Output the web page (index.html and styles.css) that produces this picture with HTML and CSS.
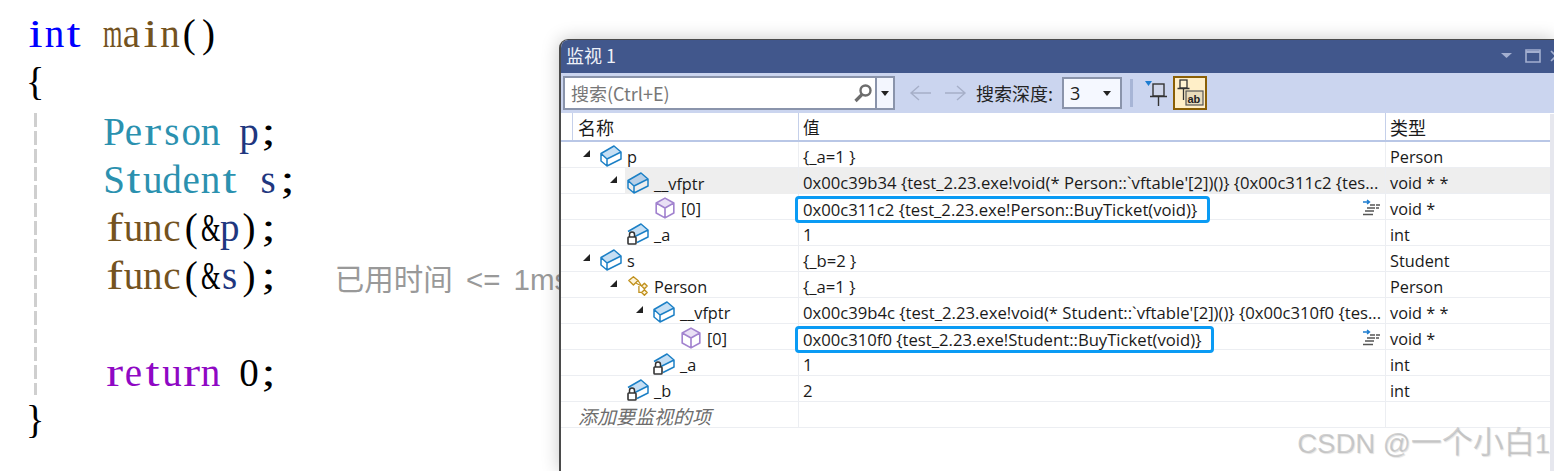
FILE: index.html
```html
<!DOCTYPE html>
<html lang="zh">
<head>
<meta charset="utf-8">
<title>监视 1</title>
<link rel="stylesheet" href="styles.css">
</head>
<body>
<svg class="defs" width="0" height="0" aria-hidden="true">
  <symbol id="box" viewBox="0 0 22 22">
    <path d="M1 8.500 14 1l7 6-14 7z" fill="#c6dff4"/>
    <path d="M1 8.500 7 14v7l-6-5zM7 14l14-7v7L7 21z" fill="#fff"/>
    <path d="M1 8.500 14 1l7 6v7L7 21l-6-5zM1 8.500 7 14l14-7M7 14v7" fill="none" stroke="#1c80c6" stroke-width="1.500" stroke-linejoin="round"/>
  </symbol>
  <symbol id="boxhl" viewBox="0 0 22 22">
    <path d="M1 8.500 14 1l7 6-14 7z" fill="#b8d0e8"/>
    <path d="M1 8.500 14 1l7 6v7L7 21l-6-5zM1 8.500 7 14l14-7M7 14v7" fill="none" stroke="#1c80c6" stroke-width="1.500" stroke-linejoin="round"/>
  </symbol>
  <symbol id="cube" viewBox="0 0 20 20">
    <path d="M10 1l8 4.500-8 4.500-8-4.500z" fill="#e9e0f5"/>
    <path d="M10 1l8 4.500v9L10 19l-8-4.500v-9zM2 5.500l8 4.500 8-4.500M10 10v9" fill="none" stroke="#a283cf" stroke-width="1.500" stroke-linejoin="round"/>
  </symbol>
  <symbol id="lockbox" viewBox="0 0 22 22">
    <path d="M1 8.500 14 1l7 6-14 7z" fill="#c6dff4"/>
    <path d="M1 8.500 14 1l7 6v7L10 19.500M7 14l14-7" fill="none" stroke="#1c80c6" stroke-width="1.500" stroke-linejoin="round"/>
    <path d="M2.500 14v-2.500a2.500 2.500 0 0 1 5 0V14" fill="#fff" stroke="#333" stroke-width="1.500"/>
    <rect x="1" y="14" width="8" height="7" rx=".8" fill="#fff" stroke="#333" stroke-width="1.600"/>
  </symbol>
  <symbol id="base" viewBox="0 0 24 22">
    <path d="M7 1l5 4-5 5-5-5zM19 8l3 3-3 3-3-3zM19 15l3 3-3 3-3-3z" fill="#fdf3d8" stroke="#c0901c" stroke-width="1.500" stroke-linejoin="round"/>
    <path d="M10 8l6 3M12 5l4 6M13 11v7h3" fill="none" stroke="#c0901c" stroke-width="1.400"/>
  </symbol>
  <symbol id="tri" viewBox="0 0 9 9">
    <path d="M8 1v7H1z" fill="#222"/>
  </symbol>
  <symbol id="viz" viewBox="0 0 18 18">
    <path d="M1 3h6M5 1l2.500 2L5 5" fill="none" stroke="#1c7cd0" stroke-width="1.400"/>
    <path d="M8 6h5M14 6h4M5 9h8M14 9h3M3 12h9M1 15.500h10" fill="none" stroke="#555" stroke-width="1.300"/>
  </symbol>
</svg>

<main class="code">
  <div class="line"><span class="kw"><i class="n">i</i><i>n</i><i class="n">t</i></span><i>&nbsp;</i><span class="fn"><i class="w">m</i><i>a</i><i class="n">i</i><i>n</i></span><span class="pn"><i>(</i><i>)</i></span></div>
  <div class="line"><span class="pn"><i>{</i></span></div>
  <div class="block">
    <div class="line"><span class="ty"><i>P</i><i>e</i><i class="n">r</i><i>s</i><i>o</i><i>n</i></span><i>&nbsp;</i><span class="var"><i>p</i></span><span class="pn"><i class="n">;</i></span></div>
    <div class="line"><span class="ty"><i>S</i><i class="n">t</i><i>u</i><i>d</i><i>e</i><i>n</i><i class="n">t</i></span><i>&nbsp;</i><span class="var"><i>s</i></span><span class="pn"><i class="n">;</i></span></div>
    <div class="line"><span class="fn"><i class="n">f</i><i>u</i><i>n</i><i>c</i></span><span class="pn"><i>(</i><i class="w">&amp;</i></span><span class="var"><i>p</i></span><span class="pn"><i>)</i><i class="n">;</i></span></div>
    <div class="line"><span class="fn"><i class="n">f</i><i>u</i><i>n</i><i>c</i></span><span class="pn"><i>(</i><i class="w">&amp;</i></span><span class="var"><i>s</i></span><span class="pn"><i>)</i><i class="n">;</i></span><span class="hint">已用时间 &lt;= 1ms</span></div>
    <div class="line"></div>
    <div class="line"><span class="rt"><i class="n">r</i><i>e</i><i class="n">t</i><i>u</i><i class="n">r</i><i>n</i></span><i>&nbsp;</i><span class="pn"><i>0</i><i class="n">;</i></span></div>
  </div>
  <div class="line"><span class="pn"><i>}</i></span></div>
</main>

<section class="watch">
  <header class="titlebar">
    <span class="title">监视 1</span>
    <svg class="winbtns" width="60" height="16" viewBox="0 0 60 16">
      <path d="M0 5h11l-5.500 5z" fill="#a3afd0"/>
      <path d="M25 2h14v12H25z" fill="none" stroke="#a3afd0" stroke-width="1.600"/>
      <path d="M25 3h14v2H25z" fill="#a3afd0"/>
      <path d="M50 3l10 10M60 3 50 13" stroke="#a3afd0" stroke-width="1.600"/>
    </svg>
  </header>
  <div class="toolbar">
    <div class="search">
      <span class="search-text">搜索(Ctrl+E)</span>
      <svg class="mag" width="20" height="20" viewBox="0 0 20 20">
        <circle cx="12.500" cy="7.500" r="5" fill="none" stroke="#6d6d6d" stroke-width="2.400"/>
        <path d="M9 11.500 2.500 18" stroke="#6d6d6d" stroke-width="3.200"/>
      </svg>
      <span class="drop"><span class="caret"></span></span>
    </div>
    <svg class="nav" width="58" height="18" viewBox="0 0 58 18">
      <path d="M22 9H2M10 2 2 9l8 7M36 9h20M48 2l8 7-8 7" fill="none" stroke="#a6afc8" stroke-width="1.400"/>
    </svg>
    <span class="depth-label">搜索深度:</span>
    <div class="combo"><span class="combo-val">3</span><span class="caret"></span></div>
    <span class="sep"></span>
    <svg class="pin" width="22" height="26" viewBox="0 0 22 26">
      <path d="M0 1h7L3.500 6z" fill="#1c7cd0"/>
      <rect x="8" y="4" width="11" height="12" fill="#cfd6ea" stroke="#333" stroke-width="1.400"/>
      <path d="M5 16.500h17M13.500 17v9" stroke="#333" stroke-width="1.400"/>
    </svg>
    <button class="toggle" type="button">
      <svg width="28" height="28" viewBox="0 0 28 28">
        <rect x="4" y="1" width="7" height="8" fill="#fff3d2" stroke="#333" stroke-width="1.300"/>
        <path d="M1.500 9.500h12M7.500 10v11" stroke="#333" stroke-width="1.300"/>
        <rect x="10" y="12" width="17" height="14" fill="#e9dcbc" stroke="#555" stroke-width="1.200"/>
        <text x="11.500" y="24" class="ab">ab</text>
      </svg>
    </button>
  </div>
  <div class="grid">
    <div class="row head"><div class="cell"></div><div class="cell name">名称</div><div class="cell val">值</div><div class="cell typ">类型</div></div>

    <div class="row"><div class="cell"></div><div class="cell name l0"><svg class="tri"><use href="#tri"/></svg><svg class="ico"><use href="#box"/></svg><span class="txt">p</span></div><div class="cell val">{_a=1 }</div><div class="cell typ">Person</div></div>

    <div class="row sel"><div class="cell"></div><div class="cell name l1"><svg class="tri"><use href="#tri"/></svg><span class="selname"><svg class="ico"><use href="#boxhl"/></svg><span class="txt">__vfptr</span></span></div><div class="cell val">0x00c39b34 {test_2.23.exe!void(* Person::`vftable'[2])()} {0x00c311c2 {tes...</div><div class="cell typ">void * *</div></div>

    <div class="row"><div class="cell"></div><div class="cell name l2"><span class="notri"></span><svg class="ico"><use href="#cube"/></svg><span class="txt">[0]</span></div><div class="cell val"><span class="hl">0x00c311c2 {test_2.23.exe!Person::BuyTicket(void)}</span><svg class="viz"><use href="#viz"/></svg></div><div class="cell typ">void *</div></div>

    <div class="row"><div class="cell"></div><div class="cell name l1"><span class="notri"></span><svg class="ico"><use href="#lockbox"/></svg><span class="txt">_a</span></div><div class="cell val">1</div><div class="cell typ">int</div></div>

    <div class="row"><div class="cell"></div><div class="cell name l0"><svg class="tri"><use href="#tri"/></svg><svg class="ico"><use href="#box"/></svg><span class="txt">s</span></div><div class="cell val">{_b=2 }</div><div class="cell typ">Student</div></div>

    <div class="row"><div class="cell"></div><div class="cell name l1"><svg class="tri"><use href="#tri"/></svg><svg class="ico"><use href="#base"/></svg><span class="txt">Person</span></div><div class="cell val">{_a=1 }</div><div class="cell typ">Person</div></div>

    <div class="row"><div class="cell"></div><div class="cell name l2m"><svg class="tri"><use href="#tri"/></svg><svg class="ico"><use href="#box"/></svg><span class="txt">__vfptr</span></div><div class="cell val">0x00c39b4c {test_2.23.exe!void(* Student::`vftable'[2])()} {0x00c310f0 {tes...</div><div class="cell typ">void * *</div></div>

    <div class="row"><div class="cell"></div><div class="cell name l3"><span class="notri"></span><svg class="ico"><use href="#cube"/></svg><span class="txt">[0]</span></div><div class="cell val"><span class="hl">0x00c310f0 {test_2.23.exe!Student::BuyTicket(void)}</span><svg class="viz"><use href="#viz"/></svg></div><div class="cell typ">void *</div></div>

    <div class="row"><div class="cell"></div><div class="cell name l2m"><span class="notri"></span><svg class="ico"><use href="#lockbox"/></svg><span class="txt">_a</span></div><div class="cell val">1</div><div class="cell typ">int</div></div>

    <div class="row"><div class="cell"></div><div class="cell name l1"><span class="notri"></span><svg class="ico"><use href="#lockbox"/></svg><span class="txt">_b</span></div><div class="cell val">2</div><div class="cell typ">int</div></div>

    <div class="row add"><div class="cell"></div><div class="cell name addtext">添加要监视的项</div><div class="cell val"></div><div class="cell typ"></div></div>
  </div>
  <div class="watermark">CSDN @<span class="wm-cjk">一个小白</span>1</div>
</section>
</body>
</html>
```
FILE: styles.css
```css
* { box-sizing: border-box; }
html, body { margin: 0; height: 100%; overflow: hidden; background: #fff; }
.defs { position: absolute; }

/* code editor */
.code { padding: 10px 0 0 25.500px; font: 39px/48.25px "Liberation Serif", serif; color: #000; }
.line { display: flex; height: 48.25px; }
.line span { display: flex; }
.line i { display: flex; justify-content: center; width: 19.25px; font-style: normal; }
.line i.w { transform: scaleX(.64); }
.line i.n { transform: scaleX(1.3); }
.block {
  margin: 0 0 -1px 8px;
  padding: 1px 0 0 71px;
  background: repeating-linear-gradient(#cfcfcf 0 14px, transparent 14px 18px) 0 6px / 3px 282px no-repeat;
}
.kw { color: #0000ff; }
.fn { color: #74531f; }
.ty { color: #2b91af; }
.var { color: #1f377f; }
.rt { color: #8f08c4; }
.line .hint {
  display: block;
  margin-left: 57px;
  padding-top: 4px;
  font: 29.500px/48.25px "Liberation Sans", "Noto Sans CJK SC", sans-serif;
  word-spacing: 5px;
  color: #999;
  white-space: nowrap;
}

/* watch window */
.watch {
  position: absolute;
  left: 559px;
  top: 39px;
  width: 995px;
  height: 432px;
  overflow: hidden;
  background: #fff;
  border-radius: 9px 0 0 0;
  box-shadow: 0 0 18px rgba(0, 0, 0, .22);
  border-top: 1px solid #4a4a4a;
  border-left: 2px solid #4a4a4a;
  font: 16.300px/26px "Open Sans", "Noto Sans CJK SC", sans-serif;
  color: #1a1a1a;
}
.titlebar {
  display: flex;
  justify-content: space-between;
  align-items: center;
  height: 33px;
  padding: 0 0 2px 5px;
  background: #41578c;
}
.title { color: #eef1f8; font: 18px/31px "Noto Sans CJK SC", sans-serif; }
.winbtns { margin-right: -7px; }

.toolbar {
  display: flex;
  align-items: center;
  height: 40px;
  padding-left: 2px;
  background: #cbd5ef;
}
.search {
  display: flex;
  align-items: center;
  width: 332px;
  height: 34px;
  background: #fff;
  border: 2px solid #8a94ab;
}
.search-text { flex: 1; padding-left: 6px; color: #777; font: 18px/30px "Noto Sans CJK SC", "Noto Sans", sans-serif; }
.mag { margin-right: 2px; }
.drop {
  display: flex;
  align-items: center;
  justify-content: center;
  width: 18px;
  height: 100%;
  background: #f3f6fe;
  border-left: 2px solid #8a94ab;
}
.caret { width: 0; height: 0; border: 4.500px solid transparent; border-top: 5px solid #222; border-bottom: 0; }
.nav { margin-left: 14px; }
.depth-label { margin-left: 9px; font: 18px/30px "Noto Sans CJK SC", sans-serif; color: #222; white-space: nowrap; }
.combo {
  display: flex;
  align-items: center;
  justify-content: space-between;
  width: 60px;
  height: 32px;
  margin-left: 9px;
  padding: 0 9px 0 6px;
  background: #f5f8ff;
  border: 2px solid #8a94ab;
}
.combo-val { font: 18px/28px "Open Sans", sans-serif; color: #222; }
.sep { width: 3px; height: 28px; margin-left: 8px; background: #a7b5d6; }
.pin { margin-left: 12px; }
.toggle {
  display: flex;
  align-items: center;
  justify-content: center;
  width: 34px;
  height: 34px;
  margin-left: 6px;
  padding: 0;
  background: #ffefc8;
  border: 2.500px solid #8a5f05;
}
.ab { font: 700 11px "Liberation Sans", sans-serif; fill: #222; }

.grid { width: 989px; }
.row {
  display: grid;
  grid-template-columns: 11px 226px 587px 165px;
  grid-template-rows: minmax(0, 1fr);
  height: 26px;
  border-bottom: 1px solid #eceef2;
}
.cell { position: relative; display: flex; align-items: center; min-width: 0; min-height: 0; white-space: nowrap; overflow: visible; padding-top: 3px; }
.row .cell:first-child { background: #fff; }
.row .name, .row .val, .row .typ { border-left: 1px solid #eceef2; }
.row .name { border-left-color: transparent; }
.val { padding: 5px 0 0 4px; font-size: 16.670px; }
.typ { padding: 5px 0 0 4px; }
.txt { padding-top: 2px; }
.row.head { height: 29px; border-bottom: 2px solid #b9c7e6; font-size: 18px; }
.head .cell { border-left: 1px solid #c5d0ea; padding-top: 3px; }
.head .cell:first-child { border-left: 0; }
.head .name { padding-left: 5px; border-left-color: #c5d0ea; }
.l0 { padding-left: 9px; }
.l1 { padding-left: 36px; }
.l2m { padding-left: 62px; }
.l2 { padding-left: 36px; }
.l3 { padding-left: 62px; }
.tri { width: 9px; height: 9px; margin-right: 9px; margin-top: -6px; flex: none; }
.notri { display: block; width: 18px; flex: none; }
.l2 .notri, .l3 .notri { width: 45px; }
.ico { width: 22px; height: 22px; margin-right: 5px; flex: none; }
.selname { display: flex; align-items: center; align-self: stretch; flex: 1; margin: -3px 0 -1px -2px; padding: 3px 0 0 2px; background: #eeeeee; }
.sel .val, .sel .typ { background: #eeeeee; }
.sel .cell:first-child { background: #fff; }
.hl {
  display: block;
  margin-left: -8px;
  padding: 0 10px 0 5px;
  height: 27px;
  line-height: 21px;
  background: #fff;
  border: 3px solid #0a9bf4;
  border-radius: 4px;
  position: relative;
  z-index: 1;
}
.viz { position: absolute; right: 5px; top: 5px; width: 18px; height: 18px; }
.row .addtext { padding: 2px 0 0 5px; color: #6d6d6d; font-style: italic; font-size: 19px; font-family: "Noto Sans CJK SC", sans-serif; }
.watermark {
  position: absolute;
  right: 4px;
  bottom: 12px;
  color: rgba(170, 170, 170, .55);
  font: 27.500px/30px "Liberation Sans", "Noto Sans CJK SC", sans-serif;
  text-shadow: 1px 1px 1px rgba(0, 0, 0, .12);
  white-space: nowrap;
}
.wm-cjk { font-size: 31px; }
.watch::after {
  content: "";
  position: absolute;
  top: 74px;
  right: 0;
  bottom: 0;
  width: 4px;
  background: #e6e7ee;
}
```
